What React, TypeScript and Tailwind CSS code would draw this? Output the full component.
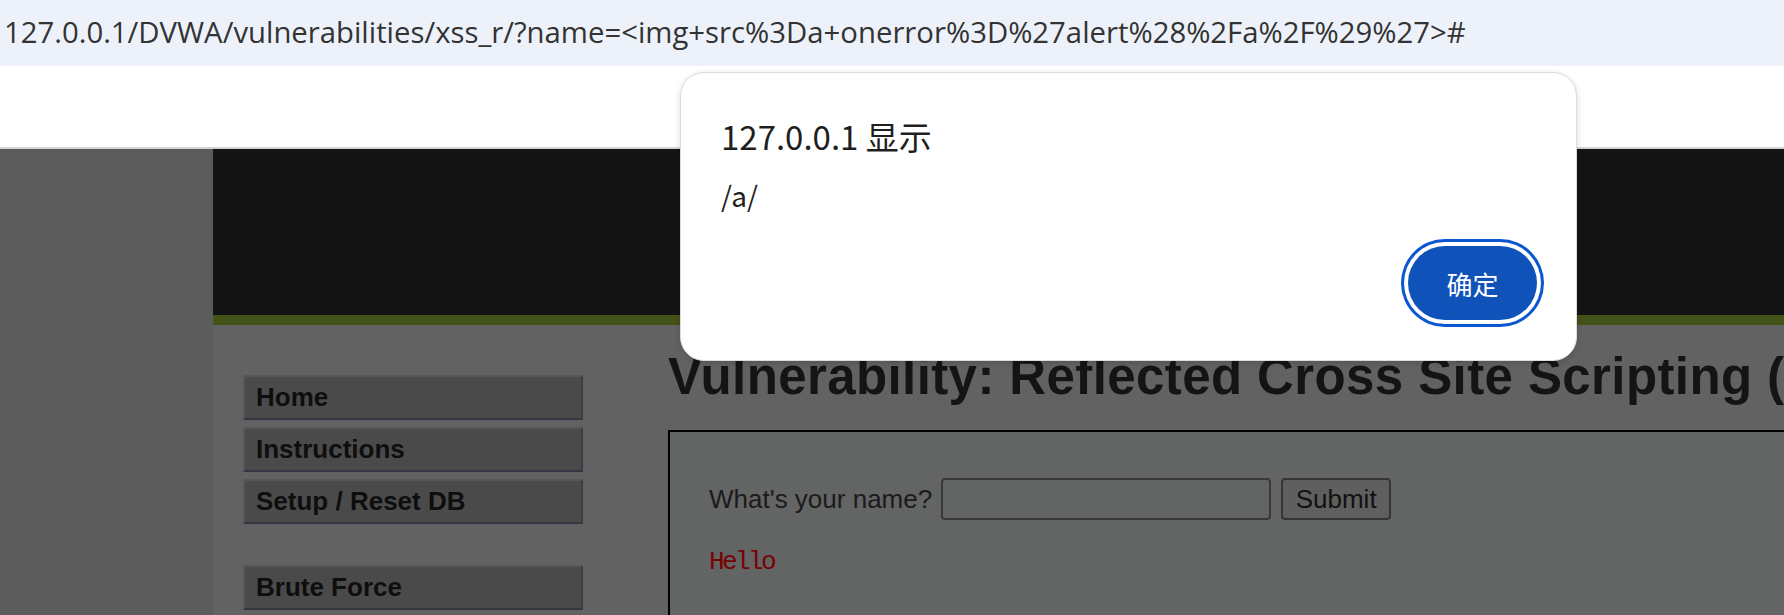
import React from "react";

const url =
  "127.0.0.1/DVWA/vulnerabilities/xss_r/?name=<img+src%3Da+onerror%3D%27alert%28%2Fa%2F%29%27>#";

const menuTop = ["Home", "Instructions", "Setup / Reset DB"];
const menuBottom = ["Brute Force"];

const MenuItem = ({ text }: { text: string }) => (
  <div className="h-[45px] w-[340px] shrink-0 flex items-center pl-[11px] bg-[#4a4a4a] border-2 border-t-[#575757] border-l-[#575757] border-b-[#333843] border-r-[#3a3d44] text-[26px] font-bold text-[#0e0e0e] font-['Liberation_Sans',Arial,sans-serif]">
    {text}
  </div>
);

const App = () => {
  return (
    <div className="relative w-[1784px] h-[615px] overflow-hidden bg-white">
      {/* address bar */}
      <div className="h-[66px] bg-[#edf2fa] flex items-center pl-[4px]">
        <span className="text-[29.3px] text-[#333] whitespace-nowrap font-['Open_Sans','Noto_Sans',sans-serif]">
          {url}
        </span>
      </div>
      <div className="h-[83px] bg-white border-b-2 border-[#d4d4d4]" />

      {/* page under the dialog */}
      <div className="flex h-[466px] overflow-hidden">
        <div className="w-[213px] bg-[#5c5c5c] shrink-0" />
        <div className="flex-1 flex flex-col min-w-0">
          <div className="h-[166px] shrink-0 bg-[#141414]" />
          <div className="h-[10px] shrink-0 bg-[#435217]" />
          <div className="flex-1 flex bg-[#626262] font-['Liberation_Sans',Arial,sans-serif]">
            <div className="pl-[30px] pt-[50px] flex flex-col gap-[7px] shrink-0">
              {menuTop.map((m) => (
                <MenuItem key={m} text={m} />
              ))}
              <div className="h-[27px] shrink-0" />
              {menuBottom.map((m) => (
                <MenuItem key={m} text={m} />
              ))}
            </div>
            <div className="ml-[85px] pt-[24px] flex flex-col shrink-0">
              <h1 className="text-[51px] leading-[56px] font-bold text-[#141414] whitespace-nowrap tracking-[0.4px]">
                Vulnerability: Reflected Cross Site Scripting (XSS)
              </h1>
              <div className="mt-[25px] w-[1200px] h-[300px] border-2 border-black bg-[#636464] pl-[39px] pt-[46px]">
                <div className="flex items-center">
                  <span className="text-[26px] text-[#1b1b1b]">What's your name?</span>
                  <div className="ml-[9px] w-[330px] h-[42px] border-2 border-[#393939] rounded-[4px]" />
                  <div className="ml-[10px] w-[110px] h-[42px] border-2 border-[#353535] rounded-[4px] bg-[#5f5f5f] flex items-center justify-center text-[26px] text-[#111]">
                    Submit
                  </div>
                </div>
                <div className="mt-[26px] text-[26px] leading-[32px] text-[#760303] tracking-[-2.6px] font-['Liberation_Mono',monospace]">
                  Hello
                </div>
              </div>
            </div>
          </div>
        </div>
      </div>

      {/* alert dialog */}
      <div className="absolute left-[680px] top-[72px] w-[897px] h-[289px] bg-white rounded-[24px] border border-[#dcdcdc] shadow-[0_2px_6px_rgba(0,0,0,0.15)] font-['Noto_Sans_CJK_SC','Noto_Sans',sans-serif] text-[#1f1f1f] flex flex-col">
        <div className="pl-[40px] pt-[41px] text-[33px] leading-[44px]">127.0.0.1 显示</div>
        <div className="pl-[40px] pt-[19px] text-[28px] leading-[36px]">/a/</div>
        <div className="flex-1 flex items-end justify-end pr-[39px] pb-[40px]">
          <button className="w-[129px] h-[74px] rounded-full bg-[#0f52ba] text-white text-[26px] ring-[3px] ring-[#0b57d0] ring-offset-[4px] ring-offset-white">
            确定
          </button>
        </div>
      </div>
    </div>
  );
};

export default App;
